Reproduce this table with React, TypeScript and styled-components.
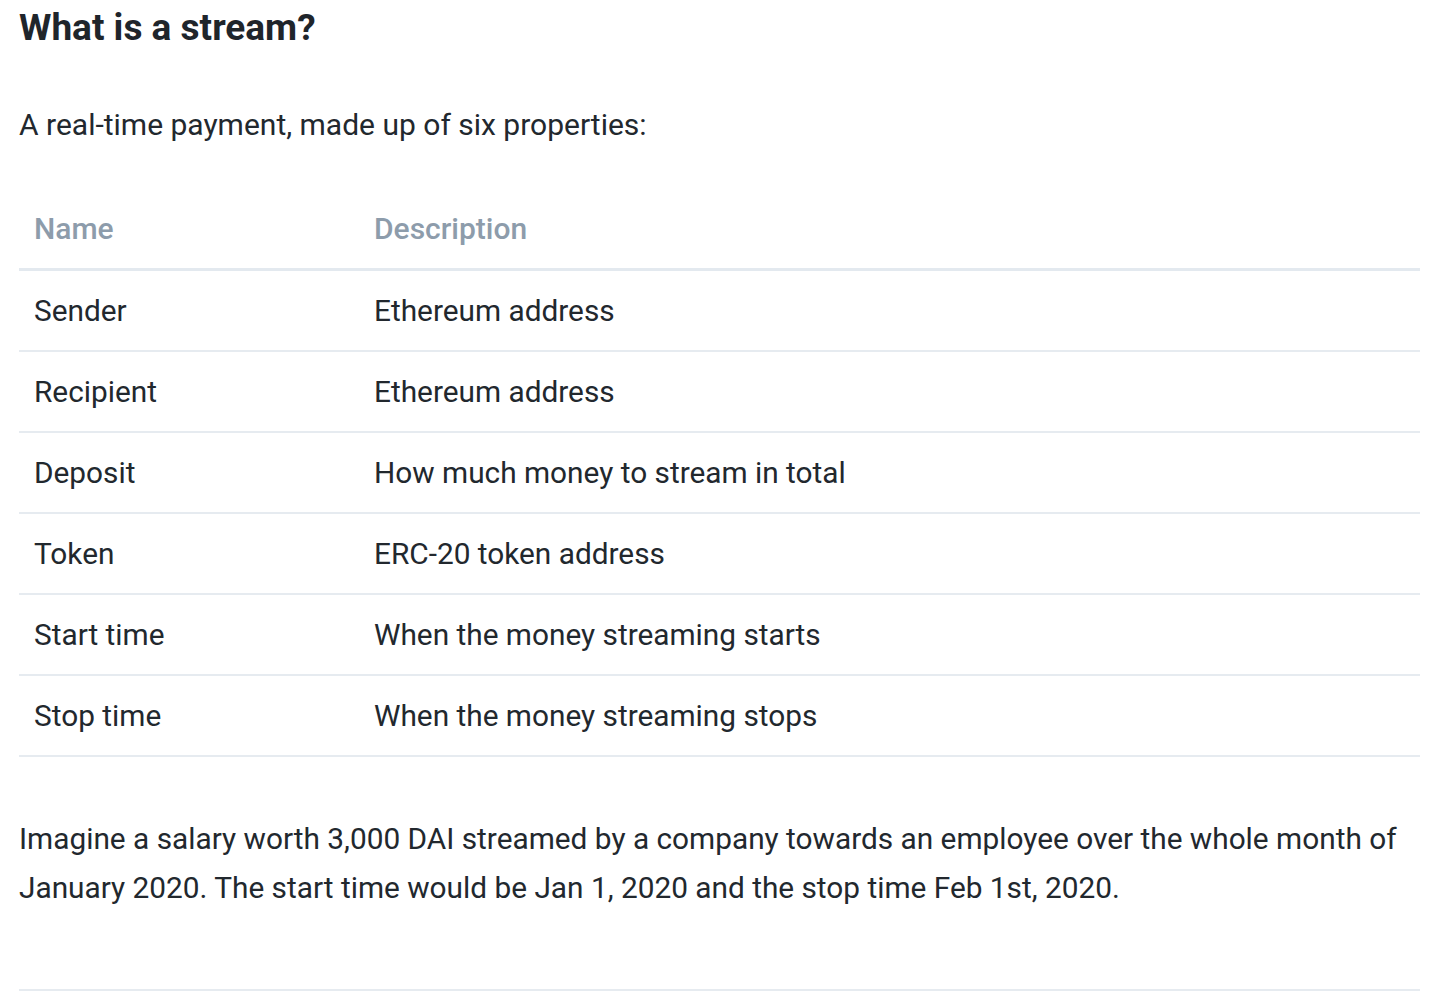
import React from "react";
import styled, { createGlobalStyle } from "styled-components";

const GlobalStyle = createGlobalStyle`
  body {
    margin: 0;
    background: #ffffff;
    font-family: Roboto, "Liberation Sans", sans-serif;
    color: #22282e;
  }
`;

const rows = [
  { name: "Sender", description: "Ethereum address" },
  { name: "Recipient", description: "Ethereum address" },
  { name: "Deposit", description: "How much money to stream in total" },
  { name: "Token", description: "ERC-20 token address" },
  { name: "Start time", description: "When the money streaming starts" },
  { name: "Stop time", description: "When the money streaming stops" },
];

const App = () => {
  return (
    <>
      <GlobalStyle />
      <Page>
        <Title>What is a stream?</Title>
        <Intro>A real-time payment, made up of six properties:</Intro>
        <Table>
          <colgroup>
            <NameCol />
            <col />
          </colgroup>
          <thead>
            <tr>
              <HeadCell>Name</HeadCell>
              <HeadCell>Description</HeadCell>
            </tr>
          </thead>
          <tbody>
            {rows.map((row) => (
              <tr key={row.name}>
                <Cell>{row.name}</Cell>
                <Cell>{row.description}</Cell>
              </tr>
            ))}
          </tbody>
        </Table>
        <Text>
          Imagine a salary worth 3,000 DAI streamed by a company towards an
          employee over the whole month of January 2020. The start time would
          be Jan 1, 2020 and the stop time Feb 1st, 2020.
        </Text>
        <Divider />
      </Page>
    </>
  );
};

export default App;

const Page = styled.div`
  width: 1401px;
  padding: 9px 0 0 19px;
`;

const Title = styled.h2`
  margin: 0;
  font-size: 37px;
  line-height: 38px;
  font-weight: 700;
  color: #1f252b;
`;

const Intro = styled.p`
  margin: 53px 0 0 0;
  font-size: 30px;
  line-height: 49px;
`;

const Table = styled.table`
  width: 100%;
  margin-top: 40px;
  border-collapse: collapse;
  table-layout: fixed;
`;

const NameCol = styled.col`
  width: 340px;
`;

const HeadCell = styled.th`
  height: 79px;
  padding: 0 15px;
  text-align: left;
  font-size: 30px;
  font-weight: 500;
  color: #8d9cab;
  border-bottom: 3px solid #e3e9ef;
`;

const Cell = styled.td`
  height: 79px;
  padding: 0 15px;
  font-size: 29.8px;
  border-bottom: 2px solid #e6ebf0;
`;

const Text = styled.p`
  margin: 57px 0 0 0;
  font-size: 29.8px;
  line-height: 49px;
`;

const Divider = styled.hr`
  margin: 77px 0 0 0;
  border: none;
  border-top: 2px solid #e6ebf0;
`;
